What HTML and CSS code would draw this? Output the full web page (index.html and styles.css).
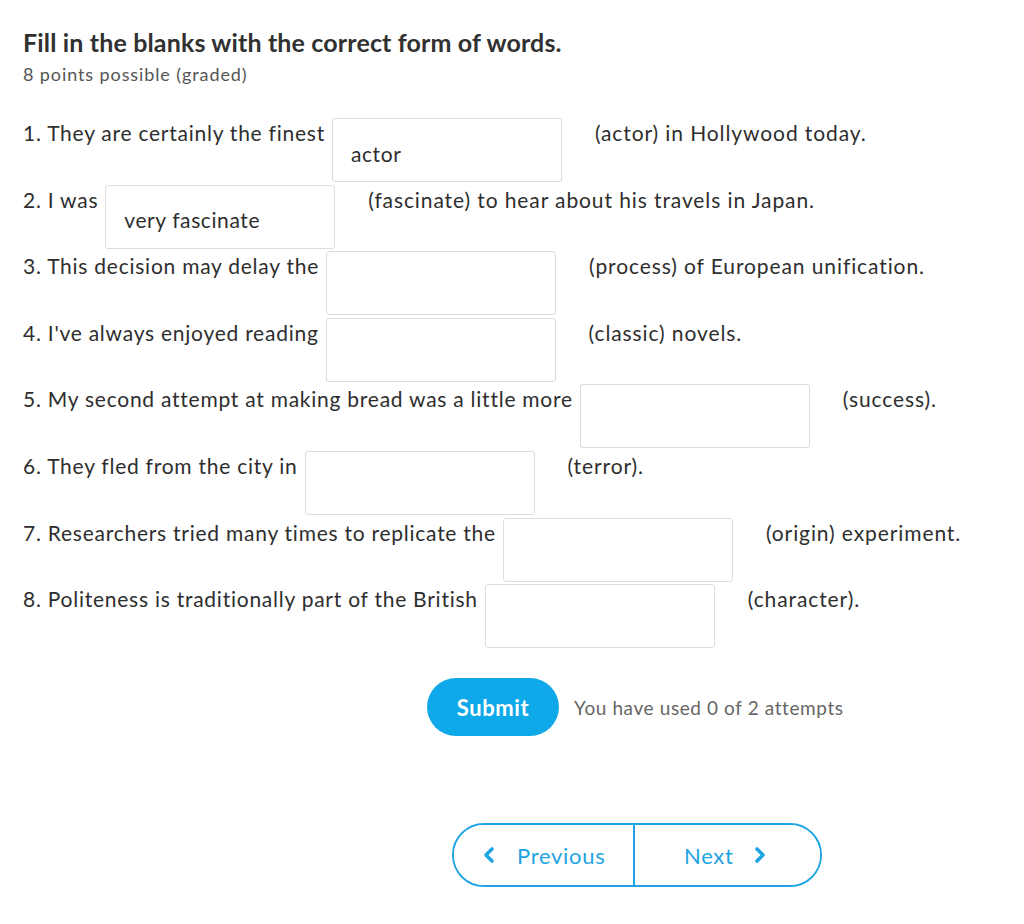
FILE: index.html
```html
<!DOCTYPE html>
<html>
<head>
<meta charset="utf-8">
<link rel="stylesheet" href="styles.css">
</head>
<body>
<div class="problem">
  <h2 class="title">Fill in the blanks with the correct form of words.</h2>
  <div class="points">8 points possible (graded)</div>

  <div class="questions">
    <div class="row"><span class="label">1. They are certainly the finest</span><input class="blank" type="text" value="actor"><span class="after">(actor) in Hollywood today.</span></div>
    <div class="row"><span class="label">2. I was</span><input class="blank" type="text" value="very fascinate"><span class="after">(fascinate) to hear about his travels in Japan.</span></div>
    <div class="row"><span class="label">3. This decision may delay the</span><input class="blank" type="text" value=""><span class="after">(process) of European unification.</span></div>
    <div class="row"><span class="label">4. I've always enjoyed reading</span><input class="blank" type="text" value=""><span class="after">(classic) novels.</span></div>
    <div class="row"><span class="label">5. My second attempt at making bread was a little more</span><input class="blank" type="text" value=""><span class="after">(success).</span></div>
    <div class="row"><span class="label">6. They fled from the city in</span><input class="blank" type="text" value=""><span class="after">(terror).</span></div>
    <div class="row"><span class="label">7. Researchers tried many times to replicate the</span><input class="blank" type="text" value=""><span class="after">(origin) experiment.</span></div>
    <div class="row"><span class="label">8. Politeness is traditionally part of the British</span><input class="blank" type="text" value=""><span class="after">(character).</span></div>
  </div>

  <div class="actions">
    <button class="submit">Submit</button>
    <span class="attempts">You have used 0 of 2 attempts</span>
  </div>

  <div class="nav">
    <div class="navgroup">
      <button class="navbtn prev"><svg class="chev" width="14" height="18" viewBox="0 0 14 18"><path d="M10 3 L4 9 L10 15" fill="none" stroke="currentColor" stroke-width="3.6" stroke-linecap="round" stroke-linejoin="round"/></svg><span>Previous</span></button>
      <button class="navbtn next"><span>Next</span><svg class="chev" width="14" height="18" viewBox="0 0 14 18"><path d="M4 3 L10 9 L4 15" fill="none" stroke="currentColor" stroke-width="3.6" stroke-linecap="round" stroke-linejoin="round"/></svg></button>
    </div>
  </div>
</div>
</body>
</html>
```

FILE: styles.css
```css
* { box-sizing: border-box; }
html, body { margin: 0; padding: 0; background: #fff; }
body {
  font-family: Lato, "Open Sans", "Liberation Sans", sans-serif;
  color: #333;
}
.problem {
  padding: 25px 23px 0 23px;
}
.title {
  margin: 0;
  font-size: 25px;
  font-weight: 700;
  color: #313131;
  letter-spacing: 0.15px;
  line-height: 34px;
}
.points {
  margin-top: 2px;
  font-size: 18px;
  color: #555;
  line-height: 26px;
  letter-spacing: 0.9px;
}
.questions {
  margin-top: 31px;
  display: flex;
  flex-direction: column;
  gap: 2.6px;
}
.row {
  display: flex;
  align-items: flex-start;
  font-size: 21px;
  color: #2e2e2e;
}
.label {
  padding-top: 3px;
  line-height: 24px;
  margin-right: 7px;
  letter-spacing: 0.75px;
  white-space: nowrap;
}
.after {
  padding-top: 3px;
  line-height: 24px;
  margin-left: 33px;
  letter-spacing: 0.9px;
  white-space: nowrap;
}
.blank {
  flex: 0 0 auto;
  width: 230px;
  height: 64px;
  border: 1.5px solid #dcdcdc;
  border-radius: 3px;
  padding: 6px 19px 0 18px;
  font-family: inherit;
  font-size: 21px;
  letter-spacing: 0.6px;
  color: #2e2e2e;
  background: #fff;
  outline: none;
  margin: 0;
}
.actions {
  margin-top: 30px;
  display: flex;
  align-items: center;
  padding-left: 404px;
}
.submit {
  width: 132px;
  height: 58px;
  border: none;
  border-radius: 29px;
  background: #0fa8e8;
  color: #fff;
  font-family: inherit;
  font-weight: 700;
  font-size: 22px;
  letter-spacing: 0.6px;
  padding: 0;
}
.attempts {
  margin-left: 15px;
  font-size: 19px;
  color: #666;
  letter-spacing: 0.6px;
}
.nav {
  margin-top: 87px;
  display: flex;
  padding-left: 429px;
}
.navgroup {
  display: flex;
  width: 370px;
  height: 64px;
  border: 2px solid #1ea4e2;
  border-radius: 32px;
  overflow: hidden;
}
.navbtn {
  flex: 0 0 auto;
  height: 100%;
  background: #fff;
  border: none;
  margin: 0;
  color: #1ea4e2;
  font-family: inherit;
  font-size: 22px;
  font-weight: 400;
  letter-spacing: 0.7px;
  display: flex;
  align-items: center;
  padding: 0;
}
.prev {
  width: 181px;
  border-right: 2px solid #1ea4e2;
  padding-left: 28px;
  gap: 21px;
}
.next {
  flex: 1;
  padding-left: 49px;
  gap: 19px;
}
.chev { display: block; }
```
